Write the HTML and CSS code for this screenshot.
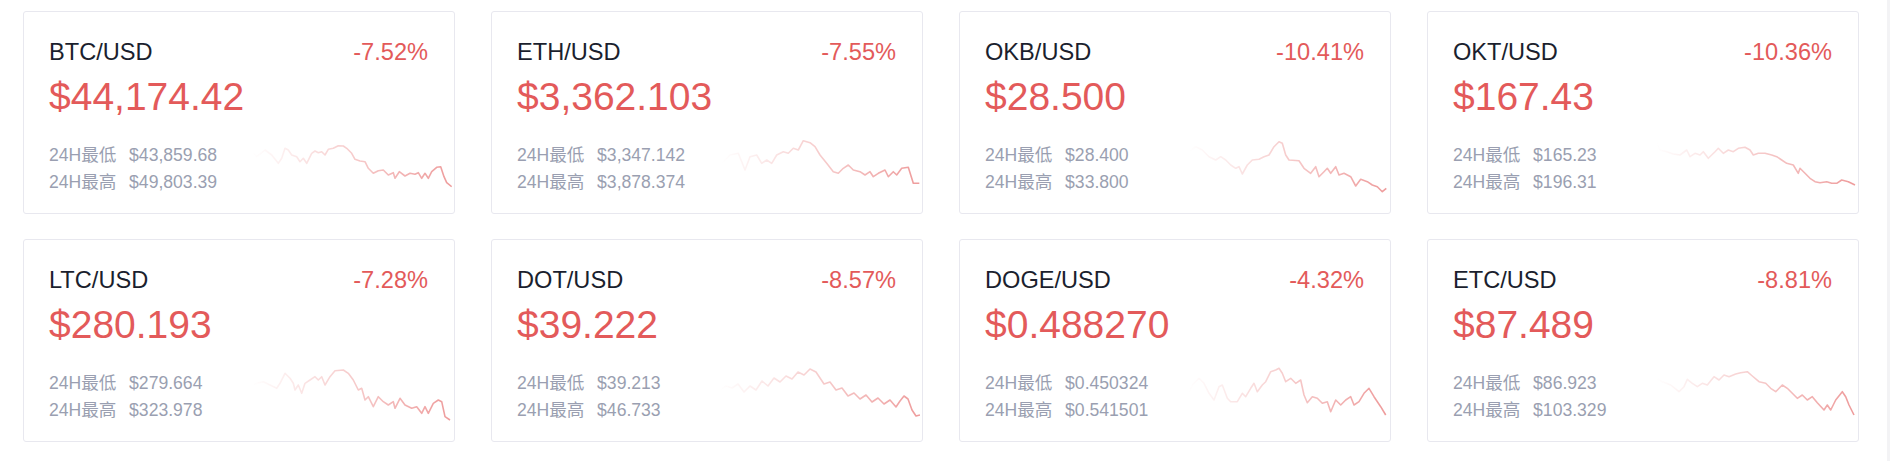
FILE: index.html
```html
<!DOCTYPE html>
<html lang="zh-CN">
<head>
    <meta charset="UTF-8">
    <meta name="viewport" content="width=device-width, initial-scale=1.0">
    <title>行情</title>
    <link rel="stylesheet" href="styles.css">
</head>
<body>
    <!-- shared stroke fade for the sparklines -->
    <svg class="svg-defs" aria-hidden="true">
        <defs>
            <linearGradient id="spark-fade" x1="0" y1="0" x2="1" y2="0">
                <stop offset="0" stop-color="#e35a5a" stop-opacity="0"/>
                <stop offset="0.4" stop-color="#e35a5a" stop-opacity="0.25"/>
                <stop offset="1" stop-color="#e35a5a" stop-opacity="0.6"/>
            </linearGradient>
        </defs>
    </svg>

    <div class="tickers">
        <div class="card">
            <div class="card-head"><span class="pair">BTC/USD</span><span class="change">-7.52%</span></div>
            <div class="price">$44,174.42</div>
            <div class="card-foot">
                <div class="stats">
                    <div><span class="label">24H最低</span>$43,859.68</div>
                    <div><span class="label">24H最高</span>$49,803.39</div>
                </div>
                <svg class="spark" viewBox="0 0 200 56"><polyline points="0,13.7 4.7,18.7 13,12 19.7,17 26.3,25.3 29.7,20.3 33,10.3 36.3,12 39.7,17 44.7,18.7 48,23.7 51.3,20.3 54.7,25.3 59.7,15.3 63,13 66.3,14.7 69.7,13.7 73,17 76.3,11.3 81.3,10.3 86.3,7.7 91.3,8 94.7,10.3 99.7,15.3 103,21.3 108,23 113,23.7 116.3,30.3 121.3,35.3 126.3,32.7 131.3,32 136.3,37 141.3,34.7 143,40.3 147.3,33.7 153,38 158,35.3 163,36.3 166.3,34.7 169.7,40.3 173,35.3 176.3,40.3 179.7,33.7 184.7,29.3 188.7,28.7 192,38.7 194.7,44.7 199.7,48.7"/></svg>
            </div>
        </div>

        <div class="card">
            <div class="card-head"><span class="pair">ETH/USD</span><span class="change">-7.55%</span></div>
            <div class="price">$3,362.103</div>
            <div class="card-foot">
                <div class="stats">
                    <div><span class="label">24H最低</span>$3,347.142</div>
                    <div><span class="label">24H最高</span>$3,878.374</div>
                </div>
                <svg class="spark" viewBox="0 0 200 56"><polyline points="1.7,25.3 10,17 18.3,15.3 25,32 30,18.7 36.7,17 41.7,25.3 46.7,22 51.7,25.3 56.7,17 63.3,13.7 68.3,15.3 73.3,10.3 78.3,12 83.3,2.7 90,4.7 95,8.7 100,17 106.7,25.3 113.3,33.7 118.3,35.3 123.3,30.3 128.3,27 133.3,32 140,33.7 145,37 150,33.7 153.3,38.7 158.3,35.3 165,32 168.3,38.7 173.3,33.7 176.7,37 181.7,30.3 188.3,29.3 193.3,45.3 199.3,45.3"/></svg>
            </div>
        </div>

        <div class="card">
            <div class="card-head"><span class="pair">OKB/USD</span><span class="change">-10.41%</span></div>
            <div class="price">$28.500</div>
            <div class="card-foot">
                <div class="stats">
                    <div><span class="label">24H最低</span>$28.400</div>
                    <div><span class="label">24H最高</span>$33.800</div>
                </div>
                <svg class="spark" viewBox="0 0 200 56"><polyline points="1,13.7 7.7,8.7 14.3,12 21,18.7 27.7,22 32.7,18.7 37.7,22 42.7,27 47.7,30.3 51,28.7 54.3,36 59.3,27 64.3,22 71,21.3 76,18.7 81,17 86,8.7 91,3.7 94.3,5.3 97.7,17 101,22 111,22.7 116,30.3 122.7,35.3 127.7,28.7 131,38.7 136,33.7 139.3,30.3 142.7,35.3 147.7,28.7 151,37 156,35.3 162.7,38.7 167.7,48 172.7,41.3 179.3,43.7 184.3,47 189.3,48.7 194.3,53.7 198.3,50.3"/></svg>
            </div>
        </div>

        <div class="card">
            <div class="card-head"><span class="pair">OKT/USD</span><span class="change">-10.36%</span></div>
            <div class="price">$167.43</div>
            <div class="card-foot">
                <div class="stats">
                    <div><span class="label">24H最低</span>$165.23</div>
                    <div><span class="label">24H最高</span>$196.31</div>
                </div>
                <svg class="spark" viewBox="0 0 200 56"><polyline points="0,3.7 4,12 10.7,13.7 17.3,16 24,17 30.7,12 34,18.7 39,15.3 44,17 47.3,13.7 52.3,20.3 59,13.7 62.3,10.3 67.3,15.3 72.3,12 77.3,13.7 82.3,10.3 89,9.3 94,12 97.3,17 102.3,15.3 109,15.3 115.7,17 120.7,18.7 125.7,22 130.7,25.3 137.3,27 142.3,35.3 144,30.3 149,35.3 154,40.3 159,43.7 164,44.7 170.7,43.7 175.7,45.3 180.7,45.3 185.7,42 192.3,43.7 199,47"/></svg>
            </div>
        </div>

        <div class="card">
            <div class="card-head"><span class="pair">LTC/USD</span><span class="change">-7.28%</span></div>
            <div class="price">$280.193</div>
            <div class="card-foot">
                <div class="stats">
                    <div><span class="label">24H最低</span>$279.664</div>
                    <div><span class="label">24H最高</span>$323.978</div>
                </div>
                <svg class="spark" viewBox="0 0 200 56"><polyline points="0,19 4.7,17.3 11.3,15.7 18,19 24.7,22.3 28,17.3 33,7.3 38,12.3 41.3,17.3 43,24 46.3,19 49.7,27.3 53,17.3 58,14 63,10.7 66.3,14 69.7,10.7 73,19 78,10.7 83,4.7 91.3,4 96.3,7.3 101.3,14 106.3,24 109.7,22.3 113,34 116.3,30.7 121.3,40.7 126.3,30.7 131.3,35.7 136.3,39 141.3,35.7 143,42.3 148,32.3 153,39 159.7,42.3 164.7,40.7 169.7,47.3 173,40.7 176.3,47.3 181.3,37.3 186.3,34 189.7,35.7 193,50.7 198,54"/></svg>
            </div>
        </div>

        <div class="card">
            <div class="card-head"><span class="pair">DOT/USD</span><span class="change">-8.57%</span></div>
            <div class="price">$39.222</div>
            <div class="card-foot">
                <div class="stats">
                    <div><span class="label">24H最低</span>$39.213</div>
                    <div><span class="label">24H最高</span>$46.733</div>
                </div>
                <svg class="spark" viewBox="0 0 200 56"><polyline points="0,24 6,20 12,22 18,18 24,26 30,20 36,24 42,15 48,20 54,12 60,16 66,10 72,13 78,6 84,9 90,3 96,6 100,12 104,18 110,16 116,24 122,22 128,30 134,27 140,33 146,29 152,36 158,32 164,38 170,34 176,41 180,35 184,30 188,33 192,44 196,50 200,49"/></svg>
            </div>
        </div>

        <div class="card">
            <div class="card-head"><span class="pair">DOGE/USD</span><span class="change">-4.32%</span></div>
            <div class="price">$0.488270</div>
            <div class="card-foot">
                <div class="stats">
                    <div><span class="label">24H最低</span>$0.450324</div>
                    <div><span class="label">24H最高</span>$0.541501</div>
                </div>
                <svg class="spark" viewBox="0 0 200 56"><polyline points="0,29 4.3,19 11,12.3 16,17.3 21,27.3 26,34 31,20.7 34.3,19 39.3,32.3 42.7,35.7 49.3,35.7 54.3,27.3 57.7,30.7 62.7,22.3 66,17.3 69.3,25.7 74.3,19 77.7,15.7 82.7,5.7 87.7,4 91,2.3 94.3,7.3 97.7,15.7 102.7,12.3 107.7,17.3 112.7,14 116,29 119.3,36.7 124.3,30.7 129.3,32.3 134.3,37.3 139.3,35.7 142.7,45.7 147.7,34 152.7,39 157.7,34 162.7,30.7 166,39 171,35.7 176,27.3 181,22.3 186,30.7 192.7,40.7 197.7,49"/></svg>
            </div>
        </div>

        <div class="card">
            <div class="card-head"><span class="pair">ETC/USD</span><span class="change">-8.81%</span></div>
            <div class="price">$87.489</div>
            <div class="card-foot">
                <div class="stats">
                    <div><span class="label">24H最低</span>$86.923</div>
                    <div><span class="label">24H最高</span>$103.329</div>
                </div>
                <svg class="spark" viewBox="0 0 200 56"><polyline points="0,12.3 6.3,15.7 14.7,19 23,25.7 28,20.7 31.3,13.3 36.3,17.3 41.3,20.7 46.3,17.3 51.3,19 58,10.7 63,14 68,9 73,10.7 79.7,8 84.7,6.7 91.3,5.7 96.3,10 103,15.7 109.7,17.3 114.7,22.3 119.7,25.7 126.3,19 131.3,22.3 136.3,27.3 141.3,32.3 146.3,29 151.3,34 156.3,30.7 161.3,36.7 168,44 171.3,39 174.7,44 179.7,34 186.3,25.7 189.7,30.7 193,39 198,49"/></svg>
            </div>
        </div>
    </div>
</body>
</html>
```

FILE: styles.css
```css
body {
    margin: 0;
    min-height: 100vh;
    box-sizing: border-box;
    border-right: 3px solid #f3f3f5;
    background: #fff;
    font-family: "Liberation Sans", Arial, "Noto Sans CJK SC", sans-serif;
}
.svg-defs {
    position: absolute;
    width: 0;
    height: 0;
}
.tickers {
    display: grid;
    grid-template-columns: repeat(4, 432px);
    column-gap: 36px;
    row-gap: 25px;
    padding: 11px 0 0 23px;
}
.card {
    box-sizing: border-box;
    height: 203px;
    padding: 22px 26px 0 25px;
    border: 1px solid #e8e8ef;
    border-radius: 3px;
    background: #fff;
}
.card-head {
    display: flex;
    justify-content: space-between;
    font-size: 23.6px;
    line-height: 36px;
}
.pair {
    color: #1b1f2e;
}
.change {
    color: #e35a5a;
}
.price {
    margin-top: 4px;
    color: #e35a5a;
    font-size: 39px;
    line-height: 45px;
}
.card-foot {
    display: flex;
    justify-content: space-between;
    align-items: flex-start;
    margin-top: 23.3px;
}
.stats {
    color: #9a9fb1;
    font-size: 17.6px;
    line-height: 26.6px;
    white-space: nowrap;
}
.label {
    margin-right: 12.6px;
}
.spark {
    flex: none;
    width: 200px;
    height: 56px;
    margin: -4.3px -24px 0 0;
}
.spark polyline {
    fill: none;
    stroke: url(#spark-fade);
    stroke-width: 1.6;
    stroke-linejoin: round;
}
```
